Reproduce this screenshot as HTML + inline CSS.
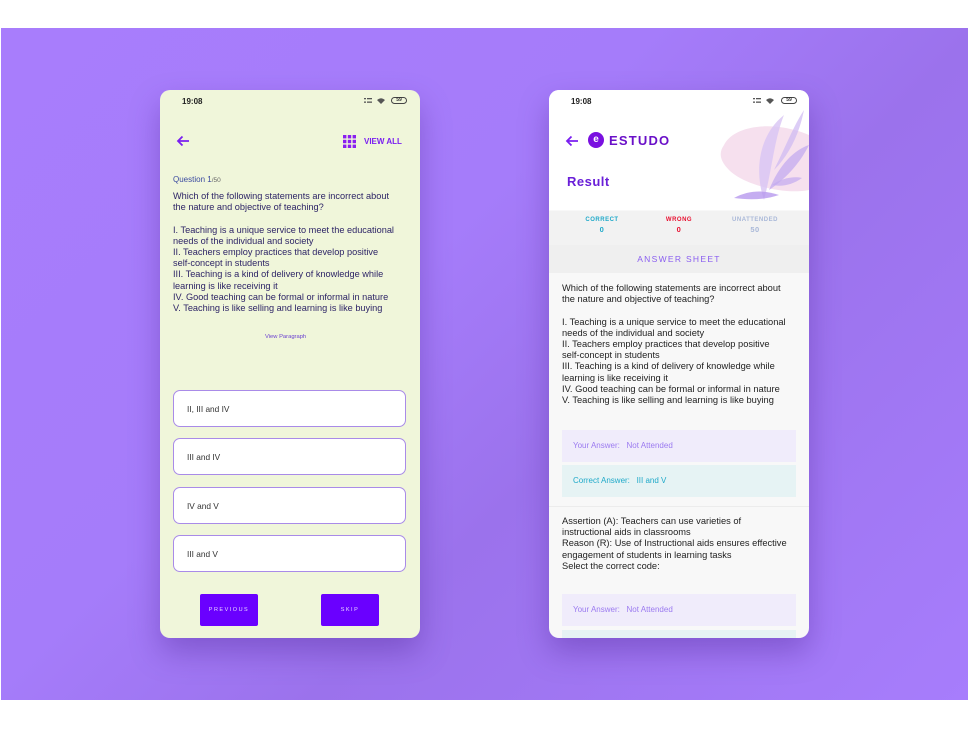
<!DOCTYPE html>
<html><head><meta charset="utf-8"><style>
*{margin:0;padding:0;box-sizing:border-box}
body{width:968px;height:750px;background:#fff;position:relative;overflow:hidden;font-family:"Liberation Sans",sans-serif}
.band{position:absolute;left:1px;top:28px;width:967px;height:672px;background:linear-gradient(135deg,#a87dfc 0%,#a57cfa 40%,#9b72ec 60%,#a77dfc 100%)}
.ph{position:absolute;top:90px;width:260px;height:548px;border-radius:10px;overflow:hidden;box-shadow:0 14px 30px rgba(70,30,140,.35)}
.l{left:160px;background:#f0f6da}
.r{left:549px;background:#f8f8f8}
.a{position:absolute}
.time{font-size:8px;font-weight:bold;color:#222}
.t{font-size:9.3px;line-height:11.2px}
.opt{position:absolute;left:13px;width:233px;height:37px;background:#fff;border:1px solid #a98be8;border-radius:7px;font-size:8.3px;color:#333;padding:0 0 0 13px;line-height:37px}
.btn{position:absolute;top:504px;width:58px;height:32px;background:#6a00ff;border-radius:2px;color:#e8d8ff;font-size:5.5px;letter-spacing:1.5px;text-align:center;line-height:32px}
.box{position:absolute;left:13px;width:234px;height:32px;font-size:8px;line-height:32px;padding-left:11px}
.bat{position:absolute;top:7px;width:16px;height:7px;border:1px solid #444;border-radius:4px;font-size:5px;text-align:center;line-height:5px;color:#333;font-weight:bold}
</style></head><body>
<div class="band"></div>

<div class="ph l">
  <div class="a time" style="left:22px;top:7px">19:08</div>
  <svg class="a" style="left:204px;top:7px" width="24" height="8" viewBox="0 0 24 8"><g fill="#555"><rect x="0" y="1" width="2" height="1.3"/><rect x="3" y="1" width="5" height="1.3"/><rect x="0" y="4.5" width="2" height="1.3"/><rect x="3" y="4.5" width="5" height="1.3"/><path d="M13 3 Q17 -0.5 21 3 L17 7Z"/></g></svg>
  <div class="bat" style="left:231px">59</div>
  <svg class="a" style="left:16px;top:45px" width="14" height="12" viewBox="0 0 14 12"><path d="M13 6H2M6.5 1.5L2 6l4.5 4.5" stroke="#7a1ff0" stroke-width="1.8" fill="none"/></svg>
  <svg class="a" style="left:183px;top:45px" width="13" height="13" viewBox="0 0 13 13" fill="#8a1ff0"><rect x="0" y="0" width="3.4" height="3.4"/><rect x="4.8" y="0" width="3.4" height="3.4"/><rect x="9.6" y="0" width="3.4" height="3.4"/><rect x="0" y="4.8" width="3.4" height="3.4"/><rect x="4.8" y="4.8" width="3.4" height="3.4"/><rect x="9.6" y="4.8" width="3.4" height="3.4"/><rect x="0" y="9.6" width="3.4" height="3.4"/><rect x="4.8" y="9.6" width="3.4" height="3.4"/><rect x="9.6" y="9.6" width="3.4" height="3.4"/></svg>
  <div class="a" style="left:204px;top:47px;font-size:8px;font-weight:bold;color:#7a1ff0">VIEW ALL</div>
  <div class="a" style="left:13px;top:85px;font-size:8px;color:#3b4aa0">Question 1<span style="font-size:6.5px;color:#666">/50</span></div>
  <div class="a t" style="left:13px;top:101px;color:#2d2466;font-size:9.2px">Which of the following statements are incorrect about<br>the nature and objective of teaching?<br><br>I. Teaching is a unique service to meet the educational<br>needs of the individual and society<br>II. Teachers employ practices that develop positive<br>self-concept in students<br>III. Teaching is a kind of delivery of knowledge while<br>learning is like receiving it<br>IV. Good teaching can be formal or informal in nature<br>V. Teaching is like selling and learning is like buying</div>
  <div class="a" style="left:105px;top:244px;font-size:5.8px;color:#6a3fd0">View Paragraph</div>
  <div class="opt" style="top:300px">II, III and IV</div>
  <div class="opt" style="top:348px">III and IV</div>
  <div class="opt" style="top:397px">IV and V</div>
  <div class="opt" style="top:445px">III and V</div>
  <div class="btn" style="left:40px">PREVIOUS</div>
  <div class="btn" style="left:161px">SKIP</div>
</div>

<div class="ph r">
  <div class="a" style="left:0;top:0;width:260px;height:120px;background:#fff"></div>
  <svg class="a" style="left:165px;top:0" width="95" height="120" viewBox="0 0 95 120">
    <path d="M10 55 C20 35 60 30 95 45 L95 100 C70 105 30 95 15 80 C5 70 5 62 10 55Z" fill="#f6e0ee"/>
    <path d="M50 110 C40 80 45 45 70 25 C60 50 58 80 50 110Z" fill="#d8c4f4" opacity=".8"/>
    <path d="M55 100 C65 75 80 60 95 55 C85 75 70 90 55 100Z" fill="#c0a6f0" opacity=".7"/>
    <path d="M20 108 C35 100 50 100 65 105 C50 110 35 110 20 108Z" fill="#b699ee" opacity=".8"/>
    <path d="M60 80 C70 60 80 35 90 20 C85 45 75 65 60 80Z" fill="#cdb8f2" opacity=".7"/>
    <path d="M58 95 C68 88 80 86 88 88 C78 95 68 97 58 95Z" fill="#c3aaf0" opacity=".7"/>
  </svg>
  <div class="a time" style="left:22px;top:7px">19:08</div>
  <svg class="a" style="left:204px;top:7px" width="24" height="8" viewBox="0 0 24 8"><g fill="#555"><rect x="0" y="1" width="2" height="1.3"/><rect x="3" y="1" width="5" height="1.3"/><rect x="0" y="4.5" width="2" height="1.3"/><rect x="3" y="4.5" width="5" height="1.3"/><path d="M13 3 Q17 -0.5 21 3 L17 7Z"/></g></svg>
  <div class="bat" style="left:232px">59</div>
  <svg class="a" style="left:16px;top:45px" width="14" height="12" viewBox="0 0 14 12"><path d="M13 6H2M6.5 1.5L2 6l4.5 4.5" stroke="#7a1ff0" stroke-width="1.8" fill="none"/></svg>
  <div class="a" style="left:39px;top:42px;width:16px;height:16px;border-radius:50%;background:#7a10e0;color:#fff;font-size:10px;text-align:center;line-height:15px;font-weight:bold">e</div>
  <div class="a" style="left:60px;top:43px;font-size:13px;font-weight:bold;color:#6a10c8;letter-spacing:1.2px">ESTUDO</div>
  <div class="a" style="left:18px;top:84px;font-size:13px;font-weight:bold;color:#6a1fd8;letter-spacing:.5px">Result</div>
  <div class="a" style="left:0;top:121px;width:260px;height:34px;background:#f2f2f2"></div>
  <div class="a" style="left:0;top:155px;width:260px;height:28px;background:#efefef"></div>
  <div class="a" style="left:33px;top:127px;width:40px;text-align:center;font-size:6px;font-weight:bold;color:#1fa9c9;letter-spacing:.5px">CORRECT<br><span style="font-size:7.5px;line-height:13px">0</span></div>
  <div class="a" style="left:110px;top:127px;width:40px;text-align:center;font-size:6px;font-weight:bold;color:#e81030;letter-spacing:.5px">WRONG<br><span style="font-size:7.5px;line-height:13px">0</span></div>
  <div class="a" style="left:176px;top:127px;width:60px;text-align:center;font-size:6px;font-weight:bold;color:#a9b8d8;letter-spacing:.5px">UNATTENDED<br><span style="font-size:7.5px;line-height:13px">50</span></div>
  <div class="a" style="left:0;top:164px;width:260px;text-align:center;font-size:8.5px;color:#8a5ef0;letter-spacing:1.3px">ANSWER SHEET</div>
  <div class="a t" style="left:13px;top:193px;color:#222">Which of the following statements are incorrect about<br>the nature and objective of teaching?<br><br>I. Teaching is a unique service to meet the educational<br>needs of the individual and society<br>II. Teachers employ practices that develop positive<br>self-concept in students<br>III. Teaching is a kind of delivery of knowledge while<br>learning is like receiving it<br>IV. Good teaching can be formal or informal in nature<br>V. Teaching is like selling and learning is like buying</div>
  <div class="box" style="top:340px;background:#f0ecfb;color:#9b7af0">Your Answer:&nbsp;&nbsp;&nbsp;Not Attended</div>
  <div class="box" style="top:375px;background:#e6f3f4;color:#1fa9c9">Correct Answer:&nbsp;&nbsp;&nbsp;III and V</div>
  <div class="a" style="left:0;top:416px;width:260px;height:1px;background:#ececec"></div>
  <div class="a t" style="left:13px;top:426px;color:#222">Assertion (A): Teachers can use varieties of<br>instructional aids in classrooms<br>Reason (R): Use of Instructional aids ensures effective<br>engagement of students in learning tasks<br>Select the correct code:</div>
  <div class="box" style="top:504px;background:#f0ecfb;color:#9b7af0">Your Answer:&nbsp;&nbsp;&nbsp;Not Attended</div>
  <div class="box" style="top:540px;background:#e6f3f4"></div>
</div>
</body></html>
